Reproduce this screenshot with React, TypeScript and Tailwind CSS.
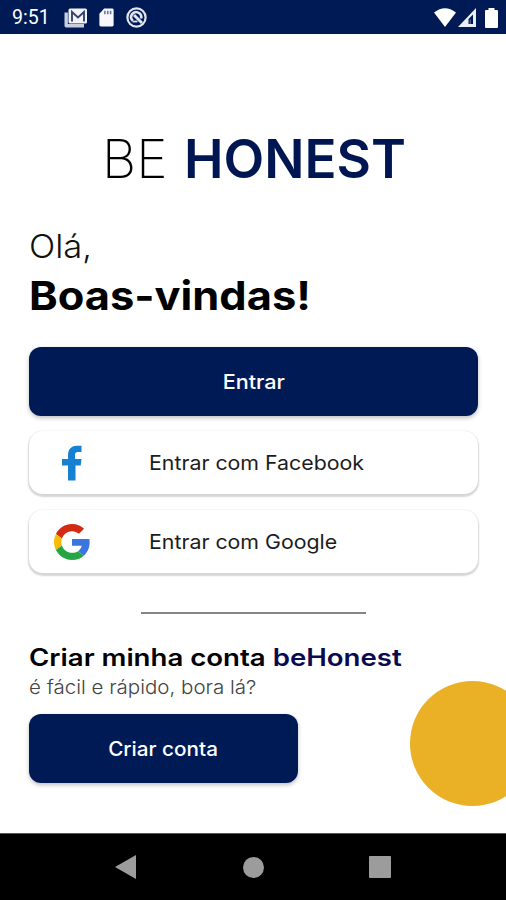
import type { ReactNode } from "react";

function StatusBar() {
  return (
    <header className="flex h-[34px] items-center bg-[#001a55] pt-px pr-2 pl-3 text-white">
      <span className="w-[52px] font-[Roboto] text-[19.5px] leading-none whitespace-nowrap">9:51</span>
      {/* Stacked mail notification */}
      <svg className="h-[20px] w-[24px]" viewBox="0 0 24 20">
        <path d="M2.200 4.500v13.300H20" fill="none" stroke="#c9cde0" strokeWidth="3.400" strokeLinejoin="round" />
        <rect x="4.500" y=".5" width="18.500" height="15" rx="1.500" fill="#f2f3f8" />
        <path d="M8 13.500V4l6 5.500L20 4v9.500" fill="none" stroke="#35416f" strokeWidth="1.900" />
      </svg>
      {/* SD card */}
      <svg className="ml-[11px] h-[19px] w-[15px]" viewBox="0 0 15 20">
        <path d="M5 .5h8.500Q15 .5 15 2v16q0 1.500-1.500 1.500h-12Q0 19.500 0 18V6z" fill="#f8f8fc" />
        <path d="M5.800 3v3.500M8.800 3v3.500M11.800 3v3.500" stroke="#68719a" strokeWidth="1.600" />
      </svg>
      {/* Circular app notification */}
      <svg className="ml-[12px] h-[21px] w-[21px]" viewBox="0 0 21 21">
        <circle cx="10.500" cy="10.500" r="9.100" fill="none" stroke="#e2e4ee" strokeWidth="2.200" />
        <path
          d="M6.800 13.800A5 5 0 1 1 15 11.500"
          fill="none"
          stroke="#e2e4ee"
          strokeWidth="2.600"
        />
        <path d="M8 8l8 8" stroke="#e2e4ee" strokeWidth="2.800" />
        <path d="M6.500 14.500h5" stroke="#e2e4ee" strokeWidth="1.800" />
      </svg>
      <div className="ml-auto flex items-center">
        <svg className="h-[19px] w-[22px]" viewBox="0 0 22 19">
          <path d="M0 4.500Q11-4 22 4.500L11 19z" fill="white" />
        </svg>
        <svg className="ml-[2px] h-[19px] w-[18px]" viewBox="0 0 18 19">
          <path d="M0 19L18 0v19z" fill="#eceef5" />
          <path d="M10.500 16V11l4.500-4.500V16z" fill="#001a55" />
          <path d="M12.200 16V11.500" stroke="#6f789f" strokeWidth="1" />
        </svg>
        <svg className="ml-[9px] h-[20px] w-[13px]" viewBox="0 0 13 20">
          <path d="M3.500 0h6v2H12q1 0 1 1v16q0 1-1 1H1q-1 0-1-1V3q0-1 1-1h2.500z" fill="white" />
        </svg>
      </div>
    </header>
  );
}

function FacebookIcon() {
  return (
    <svg className="h-[36px] w-[36px]" viewBox="0 0 36 36">
      <path
        d="M14 35.500V20.500H8V14h6V10.500C14 4 17.500.700 22.800.700H27.500V7H24c-2.300 0-3 .9-3 3v4h6.500l-.8 6.500H21.500v15z"
        fill="#1681d2"
      />
    </svg>
  );
}

function GoogleIcon() {
  return (
    <svg className="h-[36px] w-[36px]" viewBox="0 0 48 48">
      <path fill="#d32a12" d="M24 9.500c3.540 0 6.710 1.220 9.210 3.600l6.850-6.850C35.900 2.380 30.470 0 24 0 14.620 0 6.510 5.380 2.560 13.220l7.980 6.190C12.430 13.720 17.740 9.500 24 9.500z" />
      <path fill="#3b75e0" d="M47.500 24.550c0-1.570-.15-3.090-.380-4.550H24v9.020h12.940c-.58 2.960-2.260 5.480-4.780 7.180l7.730 6c4.510-4.180 7.610-10.360 7.610-17.650z" />
      <path fill="#fbbc05" d="M10.530 28.590c-.48-1.450-.76-2.990-.76-4.590s.27-3.140.76-4.590l-7.980-6.190C.92 16.460 0 20.120 0 24s.92 7.540 2.560 10.780z" />
      <path fill="#25a544" d="M24 48c6.480 0 11.930-2.130 15.890-5.810l-7.730-6c-2.150 1.450-4.920 2.300-8.160 2.300-6.260 0-11.570-4.220-13.470-9.910l-7.980 6.190C6.510 42.620 14.620 48 24 48z" />
    </svg>
  );
}

function SocialButton({ icon, children }: { icon: ReactNode; children: ReactNode }) {
  return (
    <button className="flex h-[63px] w-full items-center rounded-[14px] bg-white pl-[25px] text-[20px] text-[#1c1c1c] shadow-[0_1.5px_1.5px_1px_rgba(0,0,0,0.16)]">
      {icon}
      <span className="ml-[59px] origin-left scale-x-[1.066] whitespace-nowrap">{children}</span>
    </button>
  );
}

function NavigationBar() {
  return (
    <nav className="flex h-[67px] items-center justify-between border-t border-[#555] bg-black pr-[115px] pl-[115px]">
      <svg className="h-[24px] w-[21px]" viewBox="0 0 21 24">
        <path d="M0 12L21 0v24z" fill="#9c9c9c" />
      </svg>
      <span className="ml-[2px] h-[21px] w-[21px] rounded-full bg-[#9c9c9c]" />
      <span className="h-[22px] w-[22px] rounded-[1px] bg-[#9c9c9c]" />
    </nav>
  );
}

export default function App() {
  return (
    <div className="flex h-[900px] w-[506px] flex-col overflow-hidden bg-white font-[Inter,sans-serif] text-black">
      <StatusBar />
      <main className="relative flex-1 overflow-hidden pr-[28px] pl-[29px]">
        <h1 className="mt-[95px] ml-[73px] flex h-[60px] items-center text-[53px] leading-[60px] whitespace-nowrap">
          <span className="w-[82px] font-extralight">BE</span>
          <span className="font-semibold text-[#001653]">HONEST</span>
        </h1>

        <p className="mt-[38px] h-[40px] text-[32px] leading-[40px] font-light text-[#111]">
          <span className="inline-block origin-left scale-x-[1.08]">Olá,</span>
        </p>
        <h2 className="mt-[4px] h-[50px] text-[40px] leading-[50px] font-bold whitespace-nowrap">
          <span className="inline-block origin-left scale-x-[1.085]">Boas-vindas!</span>
        </h2>

        <button className="mt-[26px] block h-[69px] w-full rounded-[12px] bg-[#001a55] text-[20px] font-medium text-white shadow-[0_2px_4px_rgba(0,0,0,0.25)]">
          <span className="inline-block scale-x-[1.08]">Entrar</span>
        </button>
        <div className="mt-[15px] flex flex-col gap-4">
          <SocialButton icon={<FacebookIcon />}>Entrar com Facebook</SocialButton>
          <SocialButton icon={<GoogleIcon />}>Entrar com Google</SocialButton>
        </div>

        <hr className="mt-[39px] ml-[112px] w-[225px] border-t-2 border-[#858585]" />

        <h3 className="mt-[28px] h-[32px] text-[24px] leading-[32px] font-semibold whitespace-nowrap">
          <span className="inline-block origin-left scale-x-[1.15]">
            Criar minha conta <span className="text-[#0a0a50]">beHonest</span>
          </span>
        </h3>
        <p className="h-[28px] text-[19px] leading-[28px] font-light text-[#444] whitespace-nowrap">
          <span className="inline-block origin-left scale-x-[1.08]">é fácil e rápido, bora lá?</span>
        </p>
        <button className="mt-[12px] h-[69px] w-[269px] rounded-[12px] bg-[#001a55] text-[20px] font-medium text-white shadow-[0_2px_4px_rgba(0,0,0,0.25)]">
          <span className="inline-block scale-x-[1.035]">Criar conta</span>
        </button>

        {/* Decorative sun bleeding off the right edge */}
        <div className="absolute top-[647px] left-[410px] h-[125px] w-[125px] rounded-full bg-[#eab026]" />
      </main>
      <NavigationBar />
    </div>
  );
}
